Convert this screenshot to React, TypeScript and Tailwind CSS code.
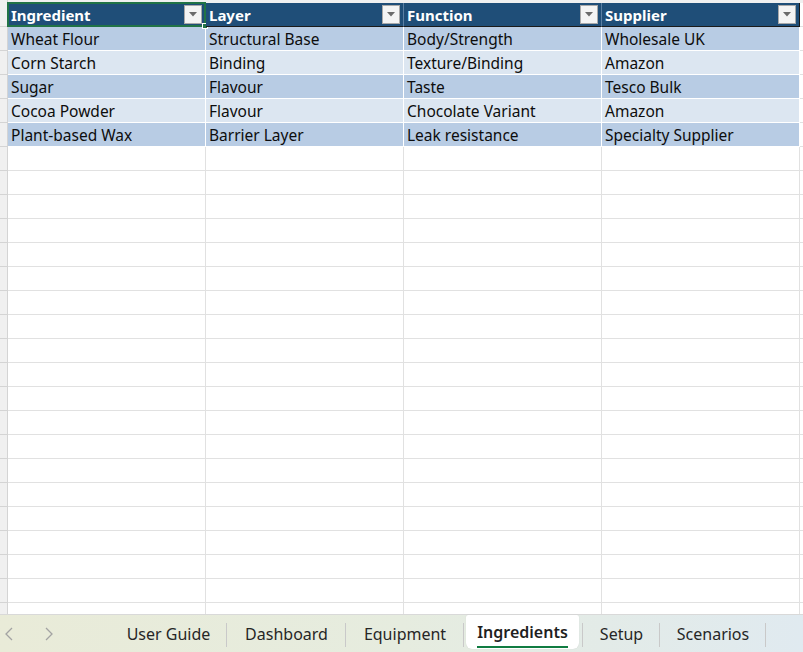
import React from "react";

const columns = ["Ingredient", "Layer", "Function", "Supplier"];

const rows: string[][] = [
  ["Wheat Flour", "Structural Base", "Body/Strength", "Wholesale UK"],
  ["Corn Starch", "Binding", "Texture/Binding", "Amazon"],
  ["Sugar", "Flavour", "Taste", "Tesco Bulk"],
  ["Cocoa Powder", "Flavour", "Chocolate Variant", "Amazon"],
  ["Plant-based Wax", "Barrier Layer", "Leak resistance", "Specialty Supplier"],
];

const tabs = [
  { name: "User Guide", w: "w-[117px]" },
  { name: "Dashboard", w: "w-[119px]" },
  { name: "Equipment", w: "w-[118px]" },
  { name: "Ingredients", w: "w-[119px]", active: true },
  { name: "Setup", w: "w-[77px]" },
  { name: "Scenarios", w: "w-[106px]" },
];

function FilterButton() {
  return (
    <span className="absolute right-[3px] top-[2px] flex h-[19px] w-[18px] items-center justify-center border border-[#a9a9a9] bg-[#f4f4f4]">
      <svg width="8" height="5" viewBox="0 0 8 5">
        <path d="M0 0h8L4 4.5z" fill="#6b6b6b" />
      </svg>
    </span>
  );
}

function Gutter() {
  return <div className="h-full w-[8px] shrink-0 border-r border-b border-[#d4d4d4] bg-[#f0f0f0]" />;
}

export default function App() {
  const empty = Array.from({ length: 20 });
  return (
    <div className="flex h-[652px] w-[803px] flex-col overflow-hidden bg-white font-['Noto_Sans',sans-serif] text-[15.5px] text-black">
      <div className="relative flex-1 overflow-hidden">
        <div className="flex h-[3px]">
          <div className="w-[8px] shrink-0 border-r border-[#d4d4d4] bg-[#f0f0f0]" />
          <div className="flex-1 bg-[#f0f0f0]" />
        </div>

        {/* header */}
        <div className="flex h-[24px]">
          <Gutter />
          {columns.map((c, i) => (
            <div
              key={c}
              className={
                "relative flex w-[198px] shrink-0 items-center border-b border-[#1a1a1a] bg-[#1f4e78] pl-[3px] pt-[2px] text-[15px] font-bold leading-none text-white " +
                (i < 3 ? "border-r border-r-[#5b7fa3]" : "border-r border-r-[#1a1a1a]")
              }
            >
              {c}
              <FilterButton />
              {i === 0 && (
                <span className="pointer-events-none absolute -left-px -top-px -bottom-px -right-px border-2 border-[#217346]">
                  <span className="absolute -bottom-[4px] -right-[4px] h-[6px] w-[6px] border border-white bg-[#217346]" />
                </span>
              )}
            </div>
          ))}
          <div className="flex-1 border-b border-[#e1e1e1]" />
        </div>

        {rows.map((r, ri) => (
          <div key={ri} className="flex h-[24px]">
            <Gutter />
            {r.map((v, ci) => (
              <div
                key={ci}
                className={
                  "flex w-[198px] shrink-0 items-center border-r border-b border-white pl-[3px] pt-[2px] leading-none text-[#0d0d0d] " +
                  (ri % 2 === 0 ? "bg-[#b8cce4]" : "bg-[#dce6f1]")
                }
              >
                {v}
              </div>
            ))}
            <div className="flex-1 border-b border-[#e1e1e1]" />
          </div>
        ))}

        {empty.map((_, i) => (
          <div key={i} className="flex h-[24px]">
            <Gutter />
            {columns.map((c) => (
              <div key={c} className="w-[198px] shrink-0 border-r border-b border-[#e1e1e1]" />
            ))}
            <div className="flex-1 border-b border-[#e1e1e1]" />
          </div>
        ))}
      </div>

      {/* sheet tabs */}
      <div className="flex h-[38px] shrink-0 border-t border-[#d9d9d9] bg-gradient-to-r from-[#e9ebd8] via-[#e6ecdf] to-[#e0eaf0] font-['Noto_Sans',sans-serif] text-[16px] text-[#262626]">
        <div className="flex w-[110px] shrink-0 items-center gap-[32px] pl-[5px]">
          <svg width="8" height="14" viewBox="0 0 8 14">
            <path d="M7 1L1 7l6 6" fill="none" stroke="#a3a3a3" strokeWidth="1.3" />
          </svg>
          <svg width="8" height="14" viewBox="0 0 8 14">
            <path d="M1 1l6 6-6 6" fill="none" stroke="#a3a3a3" strokeWidth="1.3" />
          </svg>
        </div>
        {tabs.map((t) => (
          <div key={t.name} className={"relative flex shrink-0 items-center justify-center " + t.w}>
            {t.active ? (
              <div className="absolute left-[2px] right-[4px] top-0 bottom-[3px] flex items-center justify-center rounded-b-[6px] rounded-t-[2px] bg-white shadow-[0_0_1px_rgba(0,0,0,0.15)]">
                <span className="relative font-semibold text-[#1f1f1f]">
                  {t.name}
                  <span className="absolute -bottom-[4px] left-0 right-0 h-[2px] bg-[#107c41]" />
                </span>
              </div>
            ) : (
              <span>{t.name}</span>
            )}
            <span className="absolute right-0 top-[8px] h-[24px] w-px bg-[#c9c9c9]" />
          </div>
        ))}
        <div className="flex-1" />
      </div>
    </div>
  );
}
